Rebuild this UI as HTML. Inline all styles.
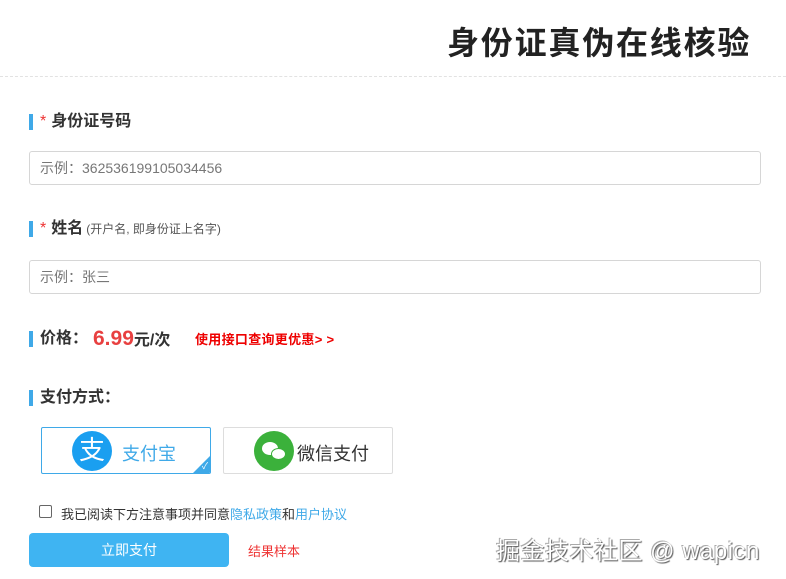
<!DOCTYPE html>
<html><head><meta charset="utf-8"><style>
*{margin:0;padding:0;box-sizing:border-box}
body{width:786px;height:579px;background:#fff;position:relative;overflow:hidden;font-family:"Liberation Sans","Noto Sans CJK SC",sans-serif;color:#333}
.abs{position:absolute}
.title{left:447px;top:18px;font-size:32px;font-weight:bold;color:#222;letter-spacing:1.8px;white-space:nowrap}
.dash{left:0;top:76px;width:786px;border-top:1px dashed #e2e2e2}
.bar{width:4px;height:16px;background:#3fa9e8}
.lab{font-size:16px;font-weight:bold;color:#333;white-space:nowrap;line-height:20px}
.star{color:#e33;font-weight:normal;margin-right:5px}
.inp{left:29px;width:732px;height:34px;border:1px solid #d6d6d6;border-radius:3px;font-size:14px;color:#777;padding-left:10px;line-height:32px}
.pay{top:427px;width:170px;height:47px;border:1px solid #ddd;border-radius:2px}
</style></head><body>
<div class="abs title">身份证真伪在线核验</div>
<div class="abs dash"></div>

<div class="abs bar" style="left:29px;top:114px"></div>
<div class="abs lab" style="left:40px;top:112px"><span class="star">*</span>身份证号码</div>
<div class="abs inp" style="top:151px">示例：362536199105034456</div>

<div class="abs bar" style="left:29px;top:221px"></div>
<div class="abs lab" style="left:40px;top:219px"><span class="star">*</span>姓名<span style="font-size:12px;font-weight:normal;color:#555;margin-left:3px">(开户名, 即身份证上名字)</span></div>
<div class="abs inp" style="top:260px">示例：张三</div>

<div class="abs bar" style="left:29px;top:331px"></div>
<div class="abs lab" style="left:40px;top:329px">价格：</div>
<div class="abs" style="left:93px;top:326px;font-size:21px;line-height:26px;font-weight:bold;color:#e84040;white-space:nowrap">6.99<span style="font-size:16px;color:#333">元/次</span></div>
<div class="abs" style="left:195px;top:331px;font-size:13px;line-height:18px;font-weight:bold;color:#e00;white-space:nowrap;letter-spacing:0.3px">使用接口查询更优惠&gt; &gt;</div>

<div class="abs bar" style="left:29px;top:390px"></div>
<div class="abs lab" style="left:40px;top:388px">支付方式：</div>

<div class="abs pay" style="left:41px;border-color:#3fa9e8;overflow:hidden">
  <div class="abs" style="left:30px;top:3px;width:40px;height:40px;border-radius:50%;background:#1a9ff0;color:#fff;font-size:26px;line-height:39px;text-align:center">支</div>
  <div class="abs" style="left:80px;top:12px;font-size:18px;color:#3fa9e8;white-space:nowrap">支付宝</div>
  <div class="abs" style="right:-12px;bottom:-12px;width:24px;height:24px;background:#3fa9e8;transform:rotate(45deg)"></div>
  <div class="abs" style="right:2px;bottom:1px;color:#fff;font-size:9px">✓</div>
</div>
<div class="abs pay" style="left:223px">
  <div class="abs" style="left:30px;top:3px;width:40px;height:40px;border-radius:50%;background:#3bb13b">
    <div class="abs" style="left:8px;top:11px;width:16px;height:13px;border-radius:50%;background:#fff"></div>
    <div class="abs" style="left:17px;top:17px;width:15px;height:12px;border-radius:50%;background:#fff;border:1px solid #3bb13b"></div>
  </div>
  <div class="abs" style="left:73px;top:12px;font-size:18px;color:#333;white-space:nowrap">微信支付</div>
</div>

<div class="abs" style="left:39px;top:505px;width:13px;height:13px;border:1px solid #666;border-radius:2px"></div>
<div class="abs" style="left:61px;top:504px;font-size:13px;color:#333;white-space:nowrap">我已阅读下方注意事项并同意<span style="color:#3fa9e8">隐私政策</span>和<span style="color:#3fa9e8">用户协议</span></div>

<div class="abs" style="left:29px;top:533px;width:200px;height:34px;background:#3fb4f2;border-radius:4px;color:#fff;font-size:14px;text-align:center;line-height:34px">立即支付</div>
<div class="abs" style="left:248px;top:541px;font-size:13px;color:#e33;white-space:nowrap">结果样本</div>

<div class="abs" style="left:496px;top:531px;font-size:24px;color:#fff;white-space:nowrap;letter-spacing:0.5px;text-shadow:1px 1px 1px #555,-1px -1px 0 #aaa">掘金技术社区 @ wapicn</div>
</body></html>
